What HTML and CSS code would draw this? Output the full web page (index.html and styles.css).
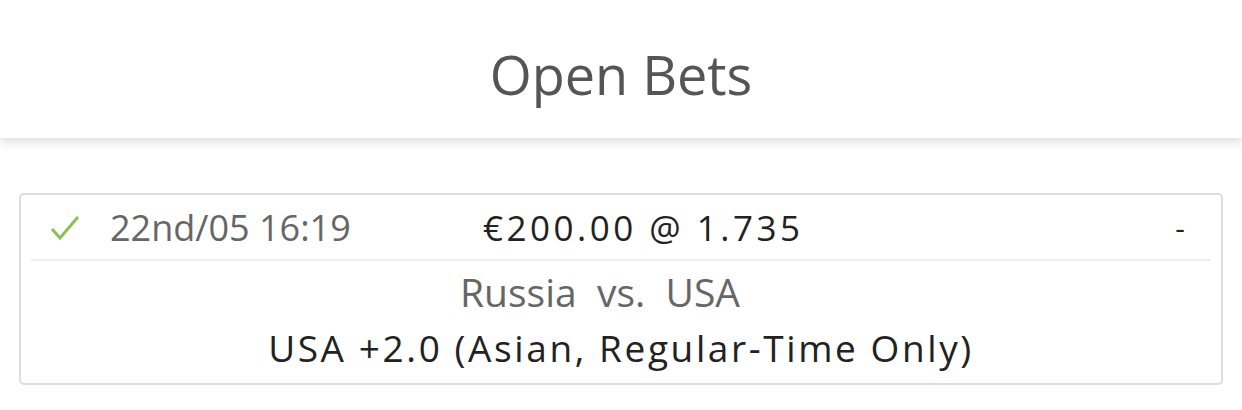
FILE: index.html
```html
<!DOCTYPE html>
<html>
<head>
<meta charset="utf-8">
<link rel="stylesheet" href="styles.css">
</head>
<body>
<header class="header"><h1 class="title">Open Bets</h1></header>
<main class="content">
  <section class="card">
    <div class="card-top">
      <svg class="check" width="32" height="28" viewBox="0 0 32 28"><path d="M3 15 L11 24 L29 3" fill="none" stroke="#8cc152" stroke-width="3"/></svg>
      <span class="date">22nd/05 16:19</span>
      <span class="amount">€200.00 @ 1.735</span>
      <span class="result">-</span>
    </div>
    <div class="divider"></div>
    <div class="match">Russia&nbsp; vs.&nbsp; USA</div>
    <div class="selection">USA +2.0 (Asian, Regular-Time Only)</div>
  </section>
</main>
</body>
</html>
```
FILE: styles.css
```css
html, body { margin: 0; padding: 0; background: #fff; }
body { font-family: "Open Sans", "Liberation Sans", sans-serif; width: 1242px; height: 410px; overflow: hidden; }
.header {
  height: 138px; background: #fff;
  box-shadow: 0 3px 10px rgba(0,0,0,0.16);
  display: flex; align-items: center; justify-content: center;
  position: relative; z-index: 1;
}
.title { margin: 0; font-weight: 400; font-size: 54px; color: #555; line-height: 1; padding-top: 9px; }
.content { padding: 55px 19px 0; }
.card {
  border: 2px solid #ddd; border-radius: 5px; height: 192px; box-sizing: border-box;
  padding: 0 10px;
}
.card-top { height: 64px; display: flex; align-items: center; position: relative; }
.check { margin-left: 18px; margin-top: 2px; }
.date { margin-left: 29px; font-size: 36px; font-stretch: 95%; color: #666; width: 373px; }
.amount { font-size: 35px; font-weight: 500; color: #222; letter-spacing: 3.5px; flex: 1; }
.result { font-size: 30px; color: #222; margin-right: 26px; }
.divider { height: 2px; background: #eee; }
.match { text-align: center; font-size: 39px; font-stretch: 95%; color: #666; margin-top: 8px; line-height: 46px; padding-right: 42px; }
.selection { text-align: center; font-size: 37px; font-weight: 500; color: #222; letter-spacing: 2.6px; margin-top: 10px; line-height: 46px; }
```
